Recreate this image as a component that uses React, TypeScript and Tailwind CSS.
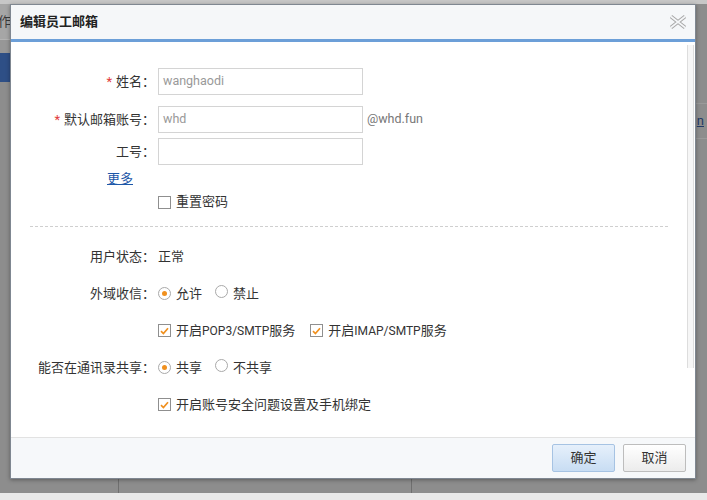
import React from "react";

const font = "font-['Roboto','Noto_Sans_CJK_SC',sans-serif]";

function Check({ checked = true }: { checked?: boolean }) {
  return (
    <span className="inline-flex h-[13px] w-[13px] items-center justify-center border border-[#8f8f8f] bg-white">
      {checked && (
        <svg width="9" height="8" viewBox="0 0 9 8">
          <path d="M1 4.2 L3.4 6.5 L8 1.2" fill="none" stroke="#f0901e" strokeWidth="1.7" />
        </svg>
      )}
    </span>
  );
}

function Radio({ checked = false }: { checked?: boolean }) {
  return (
    <span className="inline-flex h-[13px] w-[13px] items-center justify-center rounded-full border border-[#a9a9a9] bg-white">
      {checked && <span className="h-[5px] w-[5px] rounded-full bg-[#f0901e]" />}
    </span>
  );
}

function Label({ children, req = false }: { children: React.ReactNode; req?: boolean }) {
  return (
    <div className="w-[144px] shrink-0 text-right text-[13px] text-[#333]">
      {req && <span className="mr-[4px] text-[#e23b3b]">*</span>}
      {children}
    </div>
  );
}

function Input({ value }: { value?: string }) {
  return (
    <div className="flex h-[27px] w-[205px] items-center border border-[#d4d4d4] bg-white pl-[4px] text-[12.5px] text-[#999]">
      {value}
    </div>
  );
}

export default function App() {
  return (
    <div className={`relative h-[500px] w-[707px] overflow-hidden bg-[#8d8d8d] ${font}`}>
      {/* background page */}
      <div className="flex h-full w-full flex-col">
        <div className="h-[4px] bg-[#c7c7c7]" />
        <div className="flex flex-1">
          <div className="flex w-[118px] flex-col">
            <div className="flex h-[35px] items-center bg-[#a6a6a6] text-[13px] text-[#3a3a3a]">
              <span className="-ml-[2px]">作</span>
            </div>
            <div className="h-[14px] border-t border-[#b3b3b3] bg-[#979797]" />
            <div className="h-[29px] bg-[#2e4f86]" />
            <div className="flex-1" />
          </div>
          <div className="w-[293px] border-l border-[#6f6f6f]" />
          <div className="flex flex-1 flex-col border-l border-[#6f6f6f]">
            <div className="h-[74px]" />
            <div className="h-[26px] border-b border-[#9a9a9a]" />
            <div className="flex h-[35px] items-center justify-end border-b border-[#9a9a9a] pr-[3px] text-[13px] text-[#233a66] underline">
              n
            </div>
          </div>
        </div>
        <div className="h-[7px] bg-[#e9e9e9]" />
      </div>

      {/* dialog */}
      <div className="absolute left-[10px] top-[4px] flex h-[475px] w-[686px] flex-col border border-[#7f8791] bg-white shadow-[0_1px_4px_rgba(0,0,0,0.35)]">
        <div className="flex h-[37px] shrink-0 items-center justify-between border-b-[3px] border-[#6c9fd8] bg-[#f5f7f9] pl-[9px] pr-[8px]">
          <span className="text-[13px] font-bold text-[#222]">编辑员工邮箱</span>
          <svg width="18" height="14" viewBox="0 0 18 14">
            <path d="M2 1.5 L16 12.5 M16 1.5 L2 12.5" stroke="#a8a8a8" strokeWidth="3.6" fill="none" />
            <path d="M2 1.5 L16 12.5 M16 1.5 L2 12.5" stroke="#f5f7f9" strokeWidth="1.6" fill="none" />
          </svg>
        </div>

        <div className="relative flex-1 pt-[26px]">
          <div className="absolute right-[1px] top-[3px] h-[323px] w-[7px] border-x border-[#dddddd] bg-[#f6f6f6]" />

          <div className="flex items-center">
            <Label req>姓名：</Label>
            <div className="ml-[3px]"><Input value="wanghaodi" /></div>
          </div>
          <div className="mt-[11px] flex items-center">
            <Label req>默认邮箱账号：</Label>
            <div className="ml-[3px]"><Input value="whd" /></div>
            <span className="ml-[4px] text-[12.5px] text-[#777]">@whd.fun</span>
          </div>
          <div className="mt-[5px] flex items-center">
            <Label>工号：</Label>
            <div className="ml-[3px]"><Input /></div>
          </div>
          <div className="mt-[5px] flex h-[18px] items-center">
            <div className="w-[122px] text-right text-[13px] text-[#1d57a8] underline">更多</div>
          </div>
          <div className="mt-[5px] flex h-[18px] items-center pl-[147px] text-[13px] text-[#333]">
            <Check checked={false} />
            <span className="ml-[5px]">重置密码</span>
          </div>

          <div className="ml-[19px] mt-[15px] w-[638px] border-t border-dashed border-[#cfcfcf]" />

          <div className="mt-[11px] flex flex-col text-[13px] text-[#333]">
            <div className="flex h-[37px] items-center">
              <Label>用户状态：</Label>
              <span className="ml-[3px]">正常</span>
            </div>
            <div className="flex h-[37px] items-center">
              <Label>外域收信：</Label>
              <div className="ml-[3px] flex items-center">
                <Radio checked />
                <span className="ml-[5px]">允许</span>
                <span className="ml-[13px]"><Radio /></span>
                <span className="ml-[5px]">禁止</span>
              </div>
            </div>
            <div className="flex h-[37px] items-center pl-[147px]">
              <Check />
              <span className="ml-[5px]">开启<span className="text-[12px]">POP3/SMTP</span>服务</span>
              <span className="ml-[15px]"><Check /></span>
              <span className="ml-[5px]">开启<span className="text-[12px]">IMAP/SMTP</span>服务</span>
            </div>
            <div className="flex h-[37px] items-center">
              <Label>能否在通讯录共享：</Label>
              <div className="ml-[3px] flex items-center">
                <Radio checked />
                <span className="ml-[5px]">共享</span>
                <span className="ml-[13px]"><Radio /></span>
                <span className="ml-[5px]">不共享</span>
              </div>
            </div>
            <div className="flex h-[37px] items-center pl-[147px]">
              <Check />
              <span className="ml-[5px]">开启账号安全问题设置及手机绑定</span>
            </div>
          </div>
        </div>

        <div className="flex h-[41px] shrink-0 items-start justify-end gap-[8px] border-t border-[#e2e2e2] bg-[#f6f8fa] pr-[9px] pt-[6px]">
          <button className="h-[28px] w-[63px] rounded-[2px] border border-[#a6c3e3] bg-gradient-to-b from-[#e6f0fb] to-[#c8ddf3] text-[13px] text-[#333]">
            确定
          </button>
          <button className="h-[28px] w-[63px] rounded-[2px] border border-[#bdbdbd] bg-gradient-to-b from-[#ffffff] to-[#ececec] text-[13px] text-[#333]">
            取消
          </button>
        </div>
      </div>
    </div>
  );
}
